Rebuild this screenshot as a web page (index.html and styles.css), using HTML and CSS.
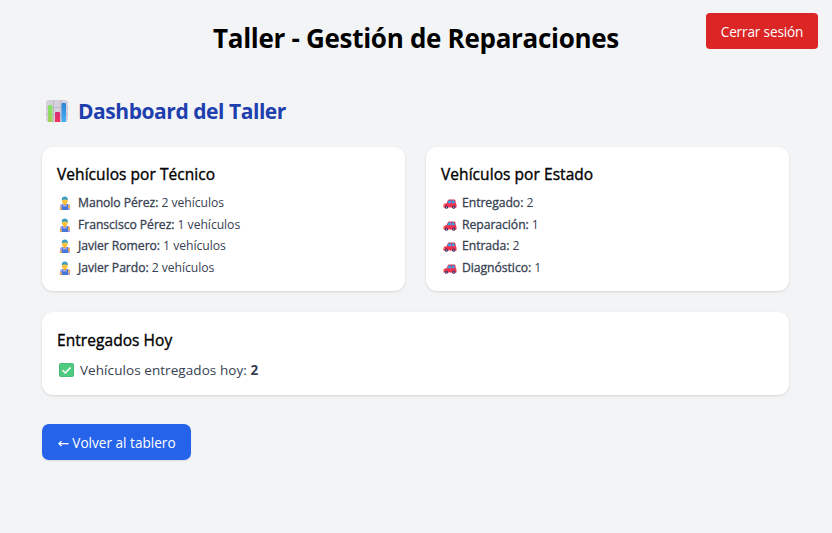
FILE: index.html
```html
<!DOCTYPE html>
<html lang="es">
<head>
<meta charset="utf-8">
<title>Taller - Gestión de Reparaciones</title>
<link rel="stylesheet" href="styles.css">
</head>
<body>
<svg class="defs" width="0" height="0" aria-hidden="true">
  <symbol id="mechanic" viewBox="0 0 12 14">
    <path d="M1 14V10.6Q1 8 3.6 8H8.4Q11 8 11 10.6V14Z" fill="#a9a5ef"/>
    <path d="M3.6 8V10.6H7.8V8H9V14H2.8V8Z" fill="#4478d8"/>
    <path d="M4.3 6.5H7.3V8.6Q5.8 10 4.3 8.6Z" fill="#f2a52c"/>
    <circle cx="5.8" cy="4.8" r="2.9" fill="#ffc43d"/>
    <path d="M2.8 4.2V3Q3 .4 5.8 .4T8.8 3V4.2Q5.8 2.8 2.8 4.2Z" fill="#3b9fc4"/>
    <path d="M9.2 9.2 10.8 8.6V12.2L9.4 12.6Z" fill="#f5ad3a"/>
    <path d="M.8 11.5 2.4 11V14H.8Z" fill="#f5ad3a"/>
  </symbol>
  <symbol id="car" viewBox="0 0 14 10">
    <path d="M3.3 4.8 5 1.2Q5.3.6 6 .6H11.2Q12 .6 12.2 1.3L13 4.8Z" fill="#d9304e"/>
    <path d="M4.2 4.7 5.5 1.4H8V4.7ZM8.7 1.4H11.2L12 4.7H8.7Z" fill="#35a3ed"/>
    <path d="M.5 8.4V6Q.6 4.7 2 4.5L4 4.2H12.5Q13.5 4.5 13.5 6V8.4Z" fill="#f4314f"/>
    <path d="M.5 5.7H1.8V6.7H.5Z" fill="#ffb34b"/>
    <circle cx="3.4" cy="8.2" r="1.6" fill="#46275c"/><circle cx="10.8" cy="8.2" r="1.6" fill="#46275c"/>
    <circle cx="3.4" cy="8.2" r=".6" fill="#c8bdd0"/><circle cx="10.8" cy="8.2" r=".6" fill="#c8bdd0"/>
  </symbol>
</svg>
<header class="header">
  <h1 class="title"><span>Taller - Gestión de Reparaciones</span></h1>
  <button class="logout"><span>Cerrar sesión</span></button>
</header>
<main class="main">
  <h2 class="heading">
    <svg class="chart" viewBox="0 0 22 22" aria-hidden="true">
      <defs>
        <linearGradient id="g" x2="0" y2="1"><stop stop-color="#83e36b"/><stop offset="1" stop-color="#a1cf58"/></linearGradient>
        <linearGradient id="b" x2="0" y2="1"><stop stop-color="#2f82d6"/><stop offset="1" stop-color="#45b1f5"/></linearGradient>
        <linearGradient id="r" x2="0" y2="1"><stop stop-color="#d02c7c"/><stop offset="1" stop-color="#f5315f"/></linearGradient>
      </defs>
      <rect width="22" height="22" rx="3" fill="#d6cfdc"/>
      <path d="M0 7.5H22M0 14.5H22M7.5 0V22M14.8 0V22" stroke="#bcb3c5" stroke-width=".8"/>
      <path d="M2 6Q2 5 3 5H5.5Q6.5 5 6.5 6V22H3Q2 22 2 21Z" fill="url(#g)"/>
      <path d="M9 13Q9 12 10 12H13Q14 12 14 13V22H9Z" fill="url(#r)"/>
      <path d="M15.5 4Q15.5 3 16.5 3H19Q20 3 20 4V22H15.5Z" fill="url(#b)"/>
    </svg>
    <span>Dashboard del Taller</span>
  </h2>
  <div class="grid">
    <section class="card">
      <h3 class="card-title">Vehículos por Técnico</h3>
      <ul class="list">
        <li><svg class="mechanic"><use href="#mechanic"/></svg><span><strong>Manolo Pérez:</strong> 2 vehículos</span></li>
        <li><svg class="mechanic"><use href="#mechanic"/></svg><span><strong>Franscisco Pérez:</strong> 1 vehículos</span></li>
        <li><svg class="mechanic"><use href="#mechanic"/></svg><span><strong>Javier Romero:</strong> 1 vehículos</span></li>
        <li><svg class="mechanic"><use href="#mechanic"/></svg><span><strong>Javier Pardo:</strong> 2 vehículos</span></li>
      </ul>
    </section>
    <section class="card">
      <h3 class="card-title">Vehículos por Estado</h3>
      <ul class="list">
        <li><svg class="car"><use href="#car"/></svg><span><strong>Entregado:</strong> 2</span></li>
        <li><svg class="car"><use href="#car"/></svg><span><strong>Reparación:</strong> 1</span></li>
        <li><svg class="car"><use href="#car"/></svg><span><strong>Entrada:</strong> 2</span></li>
        <li><svg class="car"><use href="#car"/></svg><span><strong>Diagnóstico:</strong> 1</span></li>
      </ul>
    </section>
    <section class="card wide">
      <h3 class="card-title">Entregados Hoy</h3>
      <p class="today">
        <svg class="check" viewBox="0 0 16 15" aria-hidden="true"><rect x=".5" y=".5" width="15" height="14" rx="1.2" fill="#4fcb80" stroke="#3fb873"/><path d="M3.8 7.8 6.7 10.7 12.4 4.8" fill="none" stroke="#fff" stroke-width="1.7"/></svg>
        <span>Vehículos entregados hoy: <b>2</b></span>
      </p>
    </section>
  </div>
  <button class="back"><span class="arrow">←</span> Volver al tablero</button>
</main>
</body>
</html>
```
FILE: styles.css
```css
* { box-sizing: border-box; }
body {
  margin: 0;
  min-height: 533px;
  background: #f3f4f6;
  color: #000;
  font-family: "Open Sans", "Noto Sans", sans-serif;
}
h1, h2, h3, p, ul { margin: 0; padding: 0; }
button { border: 0; padding: 0; font-family: inherit; color: #fff; }
.defs { position: absolute; }
.header { position: relative; height: 78px; padding-top: 20px; }
.title { text-align: center; font-size: 26px; line-height: 36px; font-weight: 700; letter-spacing: -0.3px; }
.logout {
  position: absolute;
  top: 13px;
  right: 14px;
  width: 112px;
  height: 36px;
  padding-top: 1px;
  border-radius: 4px;
  background: #dc2626;
  font-size: 13.6px;
  letter-spacing: -0.15px;
}
.main { padding: 18px 43px 0 42px; }
.heading {
  display: flex;
  align-items: center;
  gap: 10px;
  height: 30px;
  margin-bottom: 21px;
  padding-left: 4px;
  font-size: 21px;
  font-weight: 700;
  letter-spacing: -0.45px;
  color: #1e40af;
}
.chart { width: 22px; height: 22px; }
.grid { display: grid; grid-template-columns: 1fr 1fr; gap: 21px; }
.card {
  height: 144px;
  padding: 14px 15px;
  border-radius: 11px;
  background: #fff;
  box-shadow: 0 1px 3px rgb(0 0 0 / 0.1), 0 1px 2px -1px rgb(0 0 0 / 0.1);
}
.wide { grid-column: 1 / -1; height: 83px; padding-top: 15px; }
.card-title { font-size: 15.5px; line-height: 27px; font-weight: 500; letter-spacing: 0.06px; -webkit-text-stroke: 0.35px #000; }
.list { list-style: none; margin-top: 4px; font-size: 12.2px; line-height: 21.7px; letter-spacing: -0.05px; color: #374151; }
.list li { display: flex; align-items: center; height: 21.7px; white-space: nowrap; }
.list strong { font-weight: 500; -webkit-text-stroke: 0.3px #374151; }
.mechanic { width: 12px; height: 14px; margin: 0 7px 0 2px; }
.car { width: 14px; height: 10px; margin: 2px 5px 0 2px; }
.today { display: flex; align-items: center; height: 24px; margin-top: 4px; padding-left: 2px; gap: 6px; font-size: 13.5px; letter-spacing: 0.07px; color: #374151; }
.check { width: 15px; height: 14px; }
.back {
  display: block;
  width: 149px;
  height: 36px;
  margin-top: 29px;
  border-radius: 7px;
  background: #2563eb;
  box-shadow: 0 1px 2px rgb(0 0 0 / 0.1);
  font-size: 13.6px;
}
.arrow { font-family: "DejaVu Sans", sans-serif; line-height: 1; }
```
